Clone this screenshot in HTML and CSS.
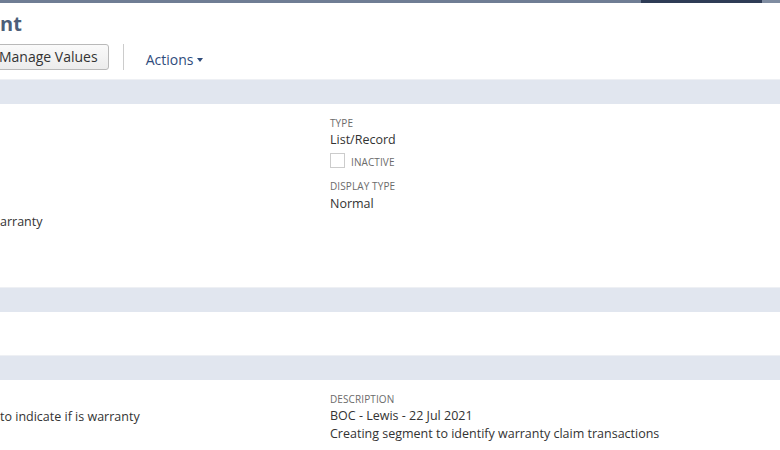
FILE: index.html
```html
<!DOCTYPE html>
<html>
<head>
<meta charset="utf-8">
<link rel="stylesheet" href="styles.css">
</head>
<body>
<div class="topbar"><div class="tb-a"></div><div class="tb-b"></div><div class="tb-c"></div></div>
<div class="title">nt</div>
<div class="toolbar">
  <div class="btn">Manage Values</div>
  <div class="sep"></div>
  <div class="actions">Actions <span class="caret"></span></div>
</div>
<div class="band first"></div>
<div class="fields f1">
  <div class="col left">
    <div class="val v-arranty">arranty</div>
  </div>
  <div class="col right">
    <div class="lbl">TYPE</div>
    <div class="val">List/Record</div>
    <div class="chk"><span class="box"></span><span class="lbl">INACTIVE</span></div>
    <div class="lbl">DISPLAY TYPE</div>
    <div class="val">Normal</div>
  </div>
</div>
<div class="band"></div>
<div class="gap"></div>
<div class="band"></div>
<div class="fields f3">
  <div class="col left">
    <div class="val v-ind">to indicate if is warranty</div>
  </div>
  <div class="col right">
    <div class="lbl">DESCRIPTION</div>
    <div class="val">BOC - Lewis - 22 Jul 2021</div>
    <div class="val">Creating segment to identify warranty claim transactions</div>
  </div>
</div>
</body>
</html>
```
FILE: styles.css
```css
html, body { margin: 0; padding: 0; background: #ffffff; }
body { font-family: "Open Sans", "Liberation Sans", sans-serif; color: #333333; width: 780px; height: 450px; overflow: hidden; }
.topbar { display: flex; height: 3px; }
.tb-a { width: 641px; background: #6f7d94; }
.tb-b { width: 121px; background: #2e3c56; }
.tb-c { flex: 1; background: #7f8ca1; }
.title { font-size: 20px; font-weight: 700; color: #4d5f79; line-height: 24px; margin-top: 9px; height: 30px; }
.toolbar { display: flex; align-items: center; height: 28px; margin-top: 1px; }
.btn { margin-left: -12px; padding: 0 10px 0 10px; height: 24px; line-height: 24px; border: 1px solid #b9b9b9; border-radius: 3px; background: linear-gradient(#fafafa, #ececec); font-size: 14px; font-weight: 400; color: #333; }
.sep { width: 1px; height: 26px; background: #cccccc; margin-left: 14px; }
.actions { margin-left: 22px; margin-top: 5px; font-size: 14px; color: #2f4c7c; font-weight: 500; display: flex; align-items: center; }
.caret { display: inline-block; width: 0; height: 0; border-left: 3.5px solid transparent; border-right: 3.5px solid transparent; border-top: 4px solid #2f4c7c; margin-left: 4px; margin-top: 1px; }
.band { height: 24px; background: #e1e6ef; margin-top: 6px; border-top: 1px solid #eef0f4; }
.band.first { margin-top: 8px; }
.fields { display: flex; }
.col.left { width: 330px; }
.lbl { font-size: 10px; color: #6b6b6b; letter-spacing: 0.1px; line-height: 13px; }
.val { font-size: 12.5px; color: #333; line-height: 17px; }
.f1 { height: 177px; }
.f1 .right { padding-top: 13px; }
.chk { display: flex; align-items: flex-end; margin-top: 4px; height: 16px; margin-bottom: 12px; }
.box { width: 15px; height: 15px; border: 1px solid #cccccc; box-sizing: border-box; margin-right: 6px; }
.chk .lbl { line-height: 11px; }
.v-arranty { margin-top: 109px; }
.f1 .right .lbl + .val { margin-top: 1px; }
.f1 .right .chk + .lbl + .val { margin-top: 2px; }
.gap { height: 37px; }
.f3 .right { padding-top: 13px; }
.f3 .right .val { line-height: 19px; }
.f3 .right .val:last-child { line-height: 18px; }
.v-ind { margin-top: 28px; }
```
